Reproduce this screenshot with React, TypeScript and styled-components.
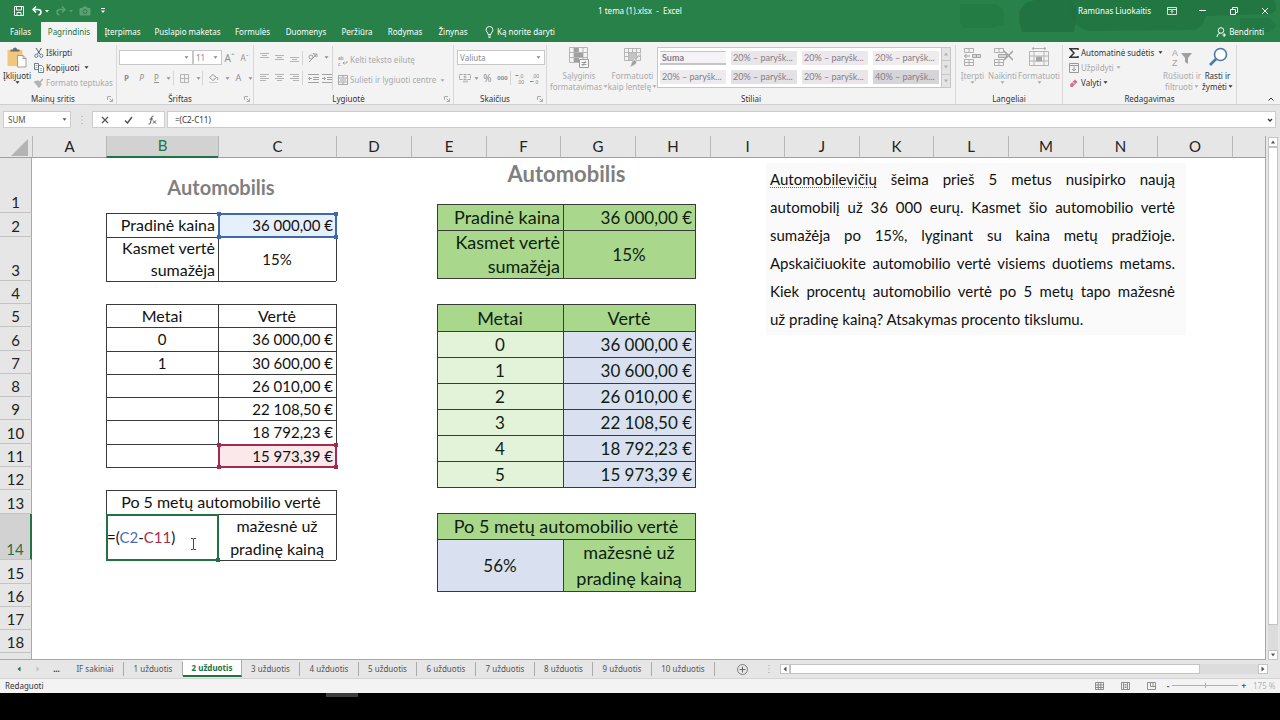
import React from 'react';
import styled, { createGlobalStyle, css } from 'styled-components';

const ui = '"Noto Sans", "Open Sans", sans-serif';
const sheetFont = 'Lato, "Liberation Sans", sans-serif';
const green = '#217346';
const ink = '#333333';
const faded = '#a9a9a9';

const Global = createGlobalStyle`
  *, *::before, *::after { box-sizing: border-box; }
  body { margin: 0; background: #000; font-family: ${ui}; font-size: 8px; line-height: 10px; color: ${ink}; font-variant-ligatures: none; }
  button, input, select { font: inherit; color: inherit; margin: 0; padding: 0; border: 0; background: none; }
  button { display: inline-flex; align-items: center; justify-content: center; white-space: nowrap; flex: none; }
  svg { display: block; flex: none; fill: none; stroke: currentColor; stroke-width: 1; font-family: "Liberation Sans", sans-serif; }
`;

const Page = styled.div`
  display: flex;
  flex-direction: column;
  min-height: 100vh;
  overflow: hidden;
`;

/* ---------- title bar and tabs ---------- */

const Header = styled.header`
  position: relative;
  background: #278148;
  color: #fff;
`;
const HeaderArt = styled.svg`
  position: absolute;
  right: 0;
  top: 0;
  && { fill: #1f6f3e; stroke: none; }
`;
const TitleBar = styled.div`
  position: relative;
  display: grid;
  grid-template-columns: 1fr auto 1fr;
  align-items: center;
  height: 22px;
`;
const QuickAccess = styled.div`
  display: flex;
  align-items: center;
  gap: 6px;
  padding-left: 13px;
`;
const QuickButton = styled.button<{ $w?: number; $dim?: boolean }>`
  width: ${p => p.$w ?? 12}px;
  height: 14px;
  opacity: ${p => (p.$dim ? 0.25 : 1)};
`;
const DocTitle = styled.h1`
  margin: 0;
  font-size: 8px;
  font-weight: 400;
`;
const WindowSide = styled.div`
  display: flex;
  justify-content: flex-end;
  align-items: center;
`;
const WindowButton = styled.button`
  width: 31px;
  height: 22px;
`;
const UserName = styled.span`
  padding-right: 5px;
`;
const TabRow = styled.nav`
  position: relative;
  display: flex;
  height: 20px;
`;
const RibbonTab = styled.button<{ $w: number; $active?: boolean }>`
  width: ${p => p.$w}px;
  height: 20px;
  ${p => p.$active && css`background: #f3f3f3; color: ${green};`}
`;
const TellMe = styled.button`
  gap: 3px;
  padding-left: 9px;
`;
const Share = styled.button`
  gap: 3px;
  margin-left: auto;
  padding-right: 16px;
`;

/* ---------- ribbon ---------- */

const Ribbon = styled.div`
  display: flex;
  height: 63px;
  background: #f3f3f3;
  border-bottom: 1px solid #cfcfcf;
  padding-top: 3px;
`;
const Group = styled.section<{ $w: number }>`
  display: flex;
  flex-direction: column;
  width: ${p => p.$w}px;
  height: 59px;
  border-right: 1px solid #d8d8d8;
  flex: none;
`;
const GroupBody = styled.div<{ $pad?: number }>`
  display: flex;
  height: 47px;
  padding-left: ${p => p.$pad ?? 0}px;
`;
const GroupLabel = styled.div<{ $launcher?: boolean }>`
  display: flex;
  justify-content: center;
  align-items: center;
  position: relative;
  height: 12px;
  padding: 1px ${p => (p.$launcher ? 10 : 0)}px 0 0;
  > svg { position: absolute; right: 3px; top: 4px; }
`;
const Stack = styled.div<{ $w?: number }>`
  display: flex;
  flex-direction: column;
  flex: none;
  width: ${p => (p.$w ? `${p.$w}px` : 'auto')};
`;
const Row = styled.div<{ $h?: number; $gap?: number }>`
  display: flex;
  align-items: center;
  height: ${p => p.$h ?? 21}px;
  gap: ${p => p.$gap ?? 0}px;
`;
const SmallButton = styled.button<{ $off?: boolean }>`
  height: 15px;
  gap: 2px;
  justify-content: flex-start;
  color: ${p => (p.$off ? faded : ink)};
`;
const BigButton = styled.button<{ $w: number; $off?: boolean }>`
  flex-direction: column;
  justify-content: flex-start;
  width: ${p => p.$w}px;
  padding-top: 2px;
  color: ${p => (p.$off ? faded : ink)};
  > svg:first-child { margin-bottom: 2px; }
`;
const BigLine = styled.span`
  display: flex;
  align-items: center;
  gap: 1px;
  height: 11px;
`;
const ToolButton = styled.button<{ $w?: number; $size?: number }>`
  width: ${p => p.$w ?? 15}px;
  height: 16px;
  font-size: ${p => p.$size ?? 8}px;
  color: #8f8f8f;
`;
const Rule = styled.span<{ $h?: number }>`
  width: 1px;
  height: ${p => p.$h ?? 14}px;
  background: #d5d5d5;
  flex: none;
`;
const SelectBox = styled.div<{ $w: number }>`
  display: grid;
  align-items: center;
  width: ${p => p.$w}px;
  height: 15px;
  background: #fff;
  border: 1px solid #c8c8c8;
  color: #8a8a8a;
  > * { grid-area: 1 / 1; }
  > svg { justify-self: end; margin-right: 3px; pointer-events: none; }
  select { appearance: none; width: 100%; padding-left: 2px; }
`;
const Gallery = styled.div`
  display: flex;
  width: 294px;
  height: 41px;
  margin-top: 2px;
  background: #fff;
  border: 1px solid #c6c6c6;
`;
const StyleGrid = styled.div`
  display: grid;
  grid-template-columns: repeat(4, 66px);
  grid-auto-rows: 14px;
  gap: 5px;
  padding: 3px 2px;
  flex: 1;
`;
const StyleButton = styled.button<{ $bg: string; $total?: boolean }>`
  justify-content: flex-start;
  padding-left: 2px;
  font-family: ${sheetFont};
  font-size: 9px;
  background: ${p => p.$bg};
  color: #857d85;
  ${p => p.$total && css`
    font-weight: 700;
    border-top: 1px solid #c4c4c4;
    border-bottom: 2px solid #c4c4c4;
  `}
`;
const GalleryScroll = styled.div`
  display: grid;
  width: 10px;
  background: #e4e4e4;
  border-left: 1px solid #c6c6c6;
  color: #b0b0b0;
  button + button { border-top: 1px solid #c6c6c6; }
`;
const RibbonEnd = styled.div`
  display: flex;
  flex: 1;
  justify-content: flex-end;
  align-items: flex-end;
  padding: 0 5px 1px 0;
`;

/* ---------- formula bar ---------- */

const FormulaBar = styled.div`
  display: flex;
  align-items: center;
  height: 31px;
  padding: 0 4px 2px 3px;
  background: #e6e6e6;
`;
const NameBox = styled.label`
  display: flex;
  align-items: center;
  width: 68px;
  height: 17px;
  padding: 0 4px;
  background: #fff;
  border: 1px solid #cdcdcd;
  color: #555;
  input { width: 54px; }
`;
const Dots = styled.span`
  width: 21px;
  display: flex;
  justify-content: center;
  color: #9a9a9a;
`;
const FormulaButtons = styled.div`
  display: flex;
  width: 73px;
  height: 17px;
  background: #fff;
  border: 1px solid #cdcdcd;
  color: #555;
  button { flex: 1; }
`;
const FormulaInput = styled.label`
  display: flex;
  align-items: center;
  flex: 1;
  height: 17px;
  margin-left: 2px;
  padding: 0 2px 0 7px;
  background: #fff;
  border: 1px solid #cdcdcd;
  input { flex: 1; }
`;

/* ---------- worksheet ---------- */

const SheetArea = styled.main`
  display: flex;
  background: #e6e6e6;
`;
const Canvas = styled.div`
  position: relative;
  flex: 1;
  background: #fff;
  border-right: 1px solid #a8a8a8;
  border-bottom: 1px solid #a8a8a8;
`;
const Sheet = styled.table`
  width: 100%;
  table-layout: fixed;
  border-collapse: separate;
  border-spacing: 0;
  font-family: ${sheetFont};
  font-size: 15px;
  line-height: 20px;
  color: #111;
`;
const ColHead = styled.th<{ $on?: boolean }>`
  height: 22px;
  padding: 0 0 1px;
  font-weight: 400;
  line-height: 19px;
  background: ${p => (p.$on ? '#d2d2d2' : '#e6e6e6')};
  color: ${p => (p.$on ? green : '#222')};
  border-left: 1px solid #b8b8b8;
  border-bottom: ${p => (p.$on ? `2px solid ${green}` : '1px solid #a0a0a0')};
`;
const Corner = styled.td`
  padding: 0 3px 1px 0;
  background: #e6e6e6;
  border-bottom: 1px solid #a0a0a0;
  vertical-align: bottom;
  color: #b4b4b4;
  svg { margin-left: auto; fill: currentColor; stroke: none; }
`;
const SheetRow = styled.tr<{ $h: number }>`
  height: ${p => p.$h}px;
`;
const RowHead = styled.th<{ $on?: boolean }>`
  padding: 0;
  font-weight: 400;
  vertical-align: bottom;
  background: ${p => (p.$on ? '#d2d2d2' : '#e6e6e6')};
  color: ${p => (p.$on ? green : '#222')};
  border-bottom: 1px solid #c4c4c4;
  border-right: ${p => (p.$on ? `2px solid ${green}` : '1px solid #a8a8a8')};
`;
const RowFoot = styled.th`
  padding: 0;
  background: #e6e6e6;
  border-right: 1px solid #a8a8a8;
`;
const edge = '#3a3a3a';
const Cell = styled.td<{ $t?: boolean; $l?: boolean; $align?: string; $lh?: number; $bg?: string }>`
  position: relative;
  padding: 0 ${p => (p.$align === 'left' ? 1 : 3)}px;
  text-align: ${p => p.$align ?? 'center'};
  line-height: ${p => p.$lh ?? 20}px;
  background: ${p => p.$bg ?? 'transparent'};
  white-space: nowrap;
  box-shadow: ${p =>
    [p.$t && `inset 0 1px ${edge}`, p.$l && `inset 1px 0 ${edge}`].filter(Boolean).join(', ') || 'none'};
`;
const TextCell = styled(Cell)`
  font-size: 16px;
`;
const SheetTitle = styled.span`
  display: block;
  padding-top: 2px;
  font-size: 20px;
  font-weight: 700;
  color: #7f7f7f;
`;
const RangeFrame = styled.span<{ $c: string }>`
  position: absolute;
  inset: 0 -1px -1px 0;
  z-index: 1;
  border: 2px solid ${p => p.$c};
`;
const Handle = styled.i<{ $c: string; $x: 'left' | 'right'; $y: 'top' | 'bottom' }>`
  position: absolute;
  ${p => p.$x}: -3px;
  ${p => p.$y}: -3px;
  width: 4px;
  height: 4px;
  background: ${p => p.$c};
`;
const Ref = styled.span<{ $c: string }>`
  color: ${p => p.$c};
`;
const Pointer = styled.svg`
  position: absolute;
  left: 84px;
  top: 24px;
`;

const SamplePicture = styled.figure`
  position: absolute;
  left: 437px;
  top: 22px;
  width: 259px;
  margin: 0;
  font-family: ${sheetFont};
  color: #10200f;
`;
const SampleTitle = styled.figcaption`
  height: 46px;
  padding-top: 4px;
  text-align: center;
  font-size: 22px;
  line-height: 24px;
  font-weight: 700;
  color: #7f7f7f;
`;
const SampleTable = styled.table`
  width: 100%;
  table-layout: fixed;
  margin-bottom: 25px;
  border-collapse: separate;
  border-spacing: 0;
  border-right: 1px solid ${edge};
  border-bottom: 1px solid ${edge};
  font-size: 17px;
`;
const SampleCell = styled(Cell)`
  padding-top: 2px;
`;
const SampleText = styled(Cell)`
  font-size: 18px;
`;
const TaskNote = styled.article`
  position: absolute;
  left: 766px;
  top: 27px;
  width: 420px;
  padding: 2px 11px 2px 4px;
  background: #fafafa;
  font-family: ${sheetFont};
  font-size: 15px;
  line-height: 28px;
  color: #111;
`;
const NoteLine = styled.span<{ $last?: boolean }>`
  display: block;
  white-space: nowrap;
  text-align: justify;
  text-align-last: ${p => (p.$last ? 'left' : 'justify')};
`;
const Misspelt = styled.span`
  text-decoration: underline dotted #c8374a 1px;
  text-decoration-skip-ink: none;
  text-underline-offset: 2px;
`;

const VScroll = styled.div`
  display: flex;
  flex-direction: column;
  width: 10px;
  margin: 1px 2px 0 2px;
  background: #dcdcdc;
`;
const ScrollButton = styled.button`
  width: 10px;
  height: 10px;
  background: #fff;
  border: 1px solid #c4c4c4;
  color: #555;
`;
const VThumb = styled.div`
  height: 478px;
  background: #fff;
  border: 1px solid #c4c4c4;
`;

/* ---------- sheet tabs and status bar ---------- */

const TabStrip = styled.div`
  display: flex;
  align-items: center;
  height: 19px;
  background: #e6e6e6;
  border-bottom: 1px solid #d4d4d4;
`;
const TabNav = styled.div`
  display: flex;
  width: 67px;
  padding-left: 9px;
  button { width: 19px; height: 16px; }
`;
const SheetTab = styled.button<{ $w: number; $on?: boolean }>`
  width: ${p => p.$w}px;
  height: ${p => (p.$on ? 17 : 14)}px;
  align-self: ${p => (p.$on ? 'flex-start' : 'center')};
  border-right: 1px solid #ababab;
  color: #555;
  ${p => p.$on && css`
    background: #fff;
    color: ${green};
    font-weight: 700;
    border-bottom: 2px solid ${green};
  `}
`;
const AddSheet = styled.button`
  width: 32px;
  height: 16px;
  margin-left: 11px;
  color: #666;
`;
const HScroll = styled.div`
  display: flex;
  flex: 1;
  height: 10px;
  margin: 0 12px 0 1px;
  background: #dcdcdc;
`;
const HThumb = styled.div`
  width: 84%;
  background: #fff;
  border: 1px solid #c4c4c4;
`;
const Track = styled.div`
  flex: 1;
`;
const StatusBar = styled.footer`
  display: flex;
  align-items: center;
  height: 14px;
  padding: 0 5px 1px;
  background: #f3f3f3;
`;
const Views = styled.div`
  display: flex;
  margin-left: auto;
  color: #777;
  button { width: 26px; height: 13px; }
`;
const ZoomControl = styled.label`
  display: flex;
  align-items: center;
  gap: 3px;
  margin-left: 2px;
  color: #555;
`;
const Slider = styled.input`
  appearance: none;
  width: 66px;
  height: 9px;
  background:
    linear-gradient(#b0b0b0, #b0b0b0) center / 1px 5px no-repeat,
    linear-gradient(#b0b0b0, #b0b0b0) center / 100% 1px no-repeat;
  &::-webkit-slider-thumb { appearance: none; width: 1px; height: 5px; background: #b0b0b0; }
`;
const ZoomValue = styled.span`
  width: 26px;
  padding-left: 4px;
  white-space: nowrap;
  color: #b4b4b4;
`;
const Taskbar = styled.div`
  flex: 1;
  min-height: 27px;
  background: #000;
  padding-left: 326px;
  &::before { content: ''; display: block; width: 32px; height: 4px; background: #3c3c3c; }
`;

/* ---------- icons ---------- */

type IcoProps = { w?: number; h?: number; children: React.ReactNode };
const Ico = ({ w = 12, h = 12, children }: IcoProps) => (
  <svg width={w} height={h} viewBox={`0 0 ${w} ${h}`} aria-hidden="true">{children}</svg>
);
const Caret = () => <Ico w={5} h={3}><path d="M0.5 0.3h4L2.5 2.8z" fill="currentColor" stroke="none" /></Ico>;
const Launcher = () => (
  <Ico w={6} h={6}><path d="M0.5 4V0.5H4M2.5 2.5L5 5M5.5 2.5v3h-3" stroke="#999" strokeWidth="0.8" /></Ico>
);
const Tri = ({ d, c = 'currentColor' }: { d: 'u' | 'd' | 'l' | 'r'; c?: string }) => (
  <Ico w={6} h={6}>
    <path fill={c} stroke="none" d={{ u: 'M3 1.5L5 4.5H1z', d: 'M1 1.5h4L3 4.5z', l: 'M1.5 3l3-2.5v5z', r: 'M4.5 3l-3-2.5v5z' }[d]} />
  </Ico>
);
const Lines = ({ xs, y }: { xs: [number, number][]; y: number }) => (
  <Ico w={10} h={14}>
    {xs.map(([a, b], i) => <path key={i} d={`M${a} ${y + i * 2 + 0.5}H${b}`} stroke="#b4b4b4" />)}
  </Ico>
);
const CellsIcon = ({ children }: { children: React.ReactNode }) => (
  <Ico w={20} h={21}>
    <path d="M1.500 1.500h9v4h-9zM6 1.500v4M1.500 12.500h9v6h-9zM6 12.500v6M1.500 15.500h9" stroke="#b0b0b0" />
    {children}
  </Ico>
);

/* ---------- data ---------- */

const columns: [string, number][] = [
  ['A', 74], ['B', 112], ['C', 118], ['D', 75], ['E', 75], ['F', 74], ['G', 75], ['H', 75],
  ['I', 74], ['J', 75], ['K', 74], ['L', 75], ['M', 75], ['N', 74], ['O', 75],
];
const ribbonTabs: [string, number][] = [
  ['Failas', 41], ['Pagrindinis', 56], ['Įterpimas', 51], ['Puslapio maketas', 79], ['Formulės', 51],
  ['Duomenys', 56], ['Peržiūra', 46], ['Rodymas', 50], ['Žinynas', 46],
];
const sheetTabs: [string, number][] = [
  ['IF sakiniai', 57], ['1 užduotis', 59], ['2 užduotis', 59], ['3 užduotis', 58], ['4 užduotis', 59],
  ['5 užduotis', 58], ['6 užduotis', 59], ['7 užduotis', 59], ['8 užduotis', 58], ['9 užduotis', 59], ['10 užduotis', 63],
];
const styleNames: [string, string][] = [
  ['Suma', '#f6f3f8'], ['20% – paryšk...', '#e9e6ea'], ['20% – paryšk...', '#ece8ec'], ['20% – paryšk...', '#f0ecee'],
  ['20% – paryšk...', '#eeebee'], ['20% – paryšk...', '#e3e1e5'], ['20% – paryšk...', '#e9e5e9'], ['40% – paryšk...', '#d6d4d8'],
];
const values = ['36 000,00 €', '30 600,00 €', '26 010,00 €', '22 108,50 €', '18 792,23 €', '15 973,39 €'];
const note = [
  'automobilį už 36 000 eurų. Kasmet šio automobilio vertė',
  'sumažėja po 15%, lyginant su kaina metų pradžioje.',
  'Apskaičiuokite automobilio vertė visiems duotiems metams.',
  'Kiek procentų automobilio vertė po 5 metų tapo mažesnė',
];

const Frame = ({ c }: { c: string }) => (
  <RangeFrame $c={c}>
    <Handle $c={c} $x="left" $y="top" />
    <Handle $c={c} $x="right" $y="top" />
    <Handle $c={c} $x="left" $y="bottom" />
    <Handle $c={c} $x="right" $y="bottom" />
  </RangeFrame>
);

const Line = ({ n, h, children }: { n: number; h: number; children?: React.ReactNode }) => (
  <SheetRow $h={h}>
    <RowHead scope="row" $on={n === 14}>{n}</RowHead>
    <Cell />
    {children ?? <Cell colSpan={2} />}
  </SheetRow>
);

const TopBar = () => (
  <Header>
    <HeaderArt width="320" height="42" viewBox="0 0 320 42" aria-hidden="true">
      <path opacity=".3" d="M0 4h36l8 6v14l-14 4H4l-4-6z" />
      <path opacity=".7" d="M60 10q6-10 16-10h34q8 4 6 18l-2 14H62q-4-10-2-22z" />
      <path opacity=".6" d="M110 0h204q6 10-4 14l-64 2q-4 14-16 14l-100 1q-14-3-18-12z" />
      <path opacity=".5" d="M280 18h30l6 8-6 6h-30z" />
    </HeaderArt>
    <TitleBar>
      <QuickAccess>
        <QuickButton aria-label="Įrašyti">
          <Ico w={10} h={10}><path d="M.5.5h9v9h-9zM2.500.5v3.500h5V.5M3 9.500V6.500h4v3" /></Ico>
        </QuickButton>
        <QuickButton $w={19} aria-label="Anuliuoti">
          <Ico w={17} h={10}><path d="M4 .5L1 3.500l3 3M1 3.500h5q3 0 3 2.500T6.500 9" strokeWidth="1.500" /><path d="M13 4h4l-2 2.500z" fill="currentColor" stroke="none" /></Ico>
        </QuickButton>
        <QuickButton $w={17} $dim aria-label="Perdaryti">
          <Ico w={17} h={10}><path d="M6 .5l3 3-3 3M9 3.500H4q-3 0-3 2.500T3.500 9" strokeWidth="1.500" /><path d="M13 4h4l-2 2.500z" fill="currentColor" stroke="none" /></Ico>
        </QuickButton>
        <QuickButton $dim aria-label="Ekrano nuotrauka">
          <Ico w={12} h={10}><path d="M1 2.500h2.500l1-1.500h3l1 1.500H11v6.500H1z" fill="currentColor" /><circle cx="6" cy="5.500" r="2" stroke="#278148" /></Ico>
        </QuickButton>
        <QuickButton aria-label="Tinkinti">
          <Ico w={6} h={6}><path d="M1 .5h4" /><path d="M1 2.500h4L3 5z" fill="currentColor" stroke="none" /></Ico>
        </QuickButton>
      </QuickAccess>
      <DocTitle>1 tema (1).xlsx&nbsp; -&nbsp; Excel</DocTitle>
      <WindowSide>
        <UserName>Ramūnas Liuokaitis</UserName>
        <WindowButton aria-label="Juostelė"><Ico w={10} h={8}><path d="M.5.5h9v7h-9zM.5 2.500h9M5 6.500V3.500M3.500 5L5 3.500 6.500 5" strokeWidth=".8" /></Ico></WindowButton>
        <WindowButton aria-label="Sumažinti"><Ico w={8} h={2}><path d="M0 .5h7" /></Ico></WindowButton>
        <WindowButton aria-label="Atkurti"><Ico w={8} h={8}><path d="M.5 2.500h5v5h-5zM2.500 2.500V.5h5v5h-2" strokeWidth=".9" /></Ico></WindowButton>
        <WindowButton aria-label="Uždaryti"><Ico w={8} h={8}><path d="M1 1l6 6M7 1L1 7" /></Ico></WindowButton>
      </WindowSide>
    </TitleBar>
    <TabRow>
      {ribbonTabs.map(([t, w], i) => <RibbonTab key={t} $w={w} $active={i === 1}>{t}</RibbonTab>)}
      <TellMe>
        <Ico w={9} h={12}><path d="M3 8.500Q3 7 2 6 1 5 1 4a3.500 3.500 0 0 1 7 0q0 1-1 2T6 8.500zM3 10h3M3.500 11.500h2" strokeWidth=".9" /></Ico>
        Ką norite daryti
      </TellMe>
      <Share>
        <Ico w={10} h={10}><circle cx="5" cy="3.500" r="2.800" /><path d="M1 10q0-3 3-4M6.500 8h3.500M8.200 6.200v3.600" /></Ico>
        Bendrinti
      </Share>
    </TabRow>
  </Header>
);

const RibbonBar = () => (
  <Ribbon>
    <Group $w={117}>
      <GroupBody>
        <BigButton $w={34}>
          <Ico w={20} h={21}>
            <path d="M.5 3h15v16H.5z" fill="#efc87e" stroke="none" />
            <path d="M3.500 4.500h9v-2h-2.500q0-2-2-2t-2 2H3.500z" fill="#6a6a6a" stroke="none" />
            <path d="M10.500 8.500h5.500l3 3v8.500h-8.500zM16 8.500v3h3" fill="#fff" stroke="#8a8a8a" strokeWidth=".8" />
          </Ico>
          <BigLine>Įklijuoti</BigLine>
          <Caret />
        </BigButton>
        <Stack>
          <SmallButton>
            <Ico w={10} h={10}><path d="M2 0l4 6M7.500 0l-4 6" stroke="#555" /><circle cx="2.300" cy="7.800" r="1.600" stroke="#5a83a8" /><circle cx="7.300" cy="7.800" r="1.600" stroke="#5a83a8" /></Ico>
            Iškirpti
          </SmallButton>
          <SmallButton>
            <Ico w={10} h={10}><path d="M.5.5h4v6h-4zM4.500 2.500h3l2 2v5h-5z" fill="#fff" stroke="#5f7186" strokeWidth=".9" /><path d="M6 5.500h2M6 7.500h2M1.500 2.500h2M1.500 4.500h2" stroke="#5f86ac" strokeWidth=".7" /></Ico>
            Kopijuoti&nbsp; <Caret />
          </SmallButton>
          <SmallButton $off>
            <Ico w={10} h={10}><path d="M1 4l3-1 3 3-2 3zM6 4l3-3" fill="#b5b5b5" stroke="#b0b0b0" strokeWidth="1.500" /></Ico>
            Formato teptukas
          </SmallButton>
        </Stack>
      </GroupBody>
      <GroupLabel $launcher>Mainų sritis<Launcher /></GroupLabel>
    </Group>

    <Group $w={137}>
      <GroupBody $pad={2}>
        <Stack>
          <Row $h={25}>
            <SelectBox $w={74}><select aria-label="Šriftas" /><Caret /></SelectBox>
            <SelectBox $w={29}><select aria-label="Dydis"><option>11</option></select><Caret /></SelectBox>
            <ToolButton $size={10}>A<sup>ˆ</sup></ToolButton>
            <ToolButton $size={8}>A<sup>ˇ</sup></ToolButton>
          </Row>
          <Row $h={16}>
            <ToolButton><b>P</b></ToolButton>
            <ToolButton><i>P</i></ToolButton>
            <ToolButton><u>P</u></ToolButton>
            <ToolButton $w={9}><Caret /></ToolButton>
            <Rule />
            <ToolButton $w={20}><Ico w={9} h={9}><path d="M.5.5h8v8h-8zM4.500.5v8M.5 4.500h8" stroke="#b5b5b5" /></Ico></ToolButton>
            <ToolButton $w={8}><Caret /></ToolButton>
            <Rule />
            <ToolButton $w={20}><Ico w={11} h={10}><path d="M1.500 4.500l3.500-3 3.500 3-3.500 3zM9 4q1.500 2 .5 3" stroke="#9a9a9a" /><path d="M1 9.500h9" stroke="#ccc" /></Ico></ToolButton>
            <ToolButton $w={8}><Caret /></ToolButton>
            <ToolButton $size={9}>A</ToolButton>
            <ToolButton $w={8}><Caret /></ToolButton>
          </Row>
        </Stack>
      </GroupBody>
      <GroupLabel $launcher>Šriftas<Launcher /></GroupLabel>
    </Group>

    <Group $w={200}>
      <GroupBody $pad={3}>
        <Stack>
          <Row $h={25}>
            <ToolButton><Lines y={2} xs={[[0, 9], [2, 7], [0, 9]]} /></ToolButton>
            <ToolButton><Lines y={4} xs={[[0, 9], [2, 7], [0, 9]]} /></ToolButton>
            <ToolButton><Lines y={6} xs={[[0, 9], [2, 7], [0, 9]]} /></ToolButton>
            <Rule />
            <ToolButton $w={20}><Ico w={11} h={11}><path d="M1 10l8-8M9 2v3M9 2H6" stroke="#a0a0a0" /><path d="M1 5q0-2 2-2t2 2-2 2-2-2M5 1l3 4" stroke="#a0a0a0" /></Ico></ToolButton>
            <ToolButton $w={7}><Caret /></ToolButton>
          </Row>
          <Row $h={16}>
            <ToolButton><Lines y={3} xs={[[0, 9], [0, 6], [0, 9], [0, 6]]} /></ToolButton>
            <ToolButton><Lines y={3} xs={[[0, 9], [2, 7], [0, 9], [2, 7]]} /></ToolButton>
            <ToolButton><Lines y={3} xs={[[0, 9], [3, 9], [0, 9], [3, 9]]} /></ToolButton>
            <Rule />
            <ToolButton $w={20}><Ico w={11} h={9}><path d="M0 .5h11M5 3.500h6M5 5.500h6M0 8.500h11M4 4.500H.5M2 3L.5 4.500 2 6" stroke="#a0a0a0" /></Ico></ToolButton>
            <ToolButton $w={9}><Ico w={11} h={9}><path d="M0 .5h11M5 3.500h6M5 5.500h6M0 8.500h11M0 4.500h3.500M2 3l1.500 1.500L2 6" stroke="#a0a0a0" /></Ico></ToolButton>
          </Row>
        </Stack>
        <Row $h={46} $gap={5}>
          <Rule $h={44} />
          <Stack>
            <Row $h={24}><SmallButton $off>
              <Ico w={10} h={11}><text x="0" y="5" fontSize="5" fill="#888" stroke="none">ab</text><text x="0" y="11" fontSize="5" fill="#888" stroke="none">c</text><path d="M9 6v2H5M6.500 6.500L5 8l1.500 1.500" stroke="#999" strokeWidth=".8" /></Ico>
              Kelti teksto eilutę
            </SmallButton></Row>
            <Row $h={16}><SmallButton $off>
              <Ico w={10} h={10}><path d="M.5.5h9v9h-9zM.5 3h9M.5 7h9M5 .5V3M5 7v2.500M2 5h6" stroke="#a0a0a0" strokeWidth=".9" /></Ico>
              Sulieti ir lygiuoti centre&nbsp; <Caret />
            </SmallButton></Row>
          </Stack>
        </Row>
      </GroupBody>
      <GroupLabel $launcher>Lygiuotė<Launcher /></GroupLabel>
    </Group>

    <Group $w={93}>
      <GroupBody $pad={3}>
        <Stack>
          <Row $h={25}>
            <SelectBox $w={88}><select aria-label="Skaičių formatas"><option>Valiuta</option></select><Caret /></SelectBox>
          </Row>
          <Row $h={16}>
            <ToolButton $w={16}><Ico w={12} h={10}><path d="M.5 1.500h11v5H.5z" stroke="#a5a5a5" strokeDasharray="3 1" /><circle cx="6" cy="4" r="1" stroke="#a5a5a5" /><path d="M4 8.500h5" stroke="#c5c5c5" strokeWidth="2" /></Ico></ToolButton>
            <ToolButton $w={7}><Caret /></ToolButton>
            <ToolButton $size={10}>%</ToolButton>
            <ToolButton $w={15} $size={6}><b>000</b></ToolButton>
            <Rule />
            <ToolButton $w={18}><Ico w={11} h={11}><text x="4" y="5" fontSize="5" fill="#888" stroke="none">,0</text><text x="2" y="11" fontSize="5" fill="#888" stroke="none">,00</text><path d="M3.500 2.500H.5" stroke="#888" /></Ico></ToolButton>
            <ToolButton $w={13}><Ico w={11} h={11}><text x="2" y="5" fontSize="5" fill="#888" stroke="none">,00</text><text x="4" y="11" fontSize="5" fill="#888" stroke="none">,0</text><path d="M0 8.500h3.500" stroke="#888" /></Ico></ToolButton>
          </Row>
        </Stack>
      </GroupBody>
      <GroupLabel $launcher>Skaičius<Launcher /></GroupLabel>
    </Group>

    <Group $w={409}>
      <GroupBody $pad={3}>
        <BigButton $w={58} $off>
          <Ico w={20} h={21}>
            <path d="M.5.5h18v15H.5zM5 .5v15M9.500.5v15M14 .5v15M.5 5.500h18M.5 10.500h18" stroke="#b5b5b5" />
            <path d="M5 1h4.500v4H5zM5 6h9v4H5zM5 11h5v4H5z" fill="#a0a0a0" stroke="none" />
            <path d="M10.500 12.500h9v8h-9z" fill="#f8f8f8" stroke="#9a9a9a" />
            <path d="M12.500 15.500h5M12.500 17.500h5M16.500 14l-3 5" stroke="#888" strokeWidth=".8" />
          </Ico>
          <BigLine>Sąlyginis</BigLine>
          <BigLine>formatavimas <Caret /></BigLine>
        </BigButton>
        <BigButton $w={49} $off>
          <Ico w={20} h={21}>
            <path d="M1.500 1.500h16v12h-16zM5.500 1.500v12M9.500 1.500v12M13.500 1.500v12M1.500 5.500h16M1.500 9.500h16" stroke="#b5b5b5" />
            <path d="M6 6h7v7H6z" fill="#c4c4c4" stroke="none" />
            <path d="M19 5l-6 8-2-1zM11.500 13q2 0 2 2 0 3-7 5 2-2 2-4t3-3z" fill="#a0a0a0" stroke="#f3f3f3" strokeWidth=".5" />
          </Ico>
          <BigLine>Formatuoti</BigLine>
          <BigLine>kaip lentelę <Caret /></BigLine>
        </BigButton>
        <Gallery>
          <StyleGrid>
            {styleNames.map(([t, bg], i) => <StyleButton key={i} $bg={bg} $total={i === 0}>{t}</StyleButton>)}
          </StyleGrid>
          <GalleryScroll>
            <button aria-label="Aukštyn"><Tri d="u" /></button>
            <button aria-label="Žemyn"><Tri d="d" /></button>
            <button aria-label="Daugiau"><Tri d="d" /></button>
          </GalleryScroll>
        </Gallery>
      </GroupBody>
      <GroupLabel>Stiliai</GroupLabel>
    </Group>

    <Group $w={107}>
      <GroupBody $pad={2}>
        <BigButton $w={29} $off>
          <CellsIcon><path d="M9.500 7.500h8v3h-8zM13.500 7.500v3" fill="#d5d5d5" stroke="#a6a6a6" /><path d="M7 9H1.500M3.500 7l-2 2 2 2" stroke="#999" /></CellsIcon>
          <BigLine>Įterpti</BigLine><Caret />
        </BigButton>
        <BigButton $w={31} $off>
          <CellsIcon><path d="M5.500 7.500h8v3h-8z" fill="#d5d5d5" stroke="#a6a6a6" /><path d="M11 4l9 9M20 4l-9 9" stroke="#a0a0a0" strokeWidth="1.500" /></CellsIcon>
          <BigLine>Naikinti</BigLine><Caret />
        </BigButton>
        <BigButton $w={42} $off>
          <Ico w={20} h={21}>
            <path d="M.5 4.500h19v14H.5zM.5 9h19M.5 14h19M5 4.500v14M15 4.500v14M3 1.500h14M5 0L3 1.500 5 3M15 0l2 1.500L15 3" stroke="#b4b4b4" />
            <path d="M7 9.500h6v5H7z" fill="#a6a6a6" stroke="none" />
          </Ico>
          <BigLine>Formatuoti</BigLine><Caret />
        </BigButton>
      </GroupBody>
      <GroupLabel>Langeliai</GroupLabel>
    </Group>

    <Group $w={174}>
      <GroupBody $pad={6}>
        <Stack $w={94}>
          <SmallButton>
            <Ico w={10} h={10}><path d="M9 2V.8H1L5 5 1 9.200h8V8" strokeWidth="1.500" /></Ico>
            Automatinė sudėtis&nbsp; <Caret />
          </SmallButton>
          <SmallButton $off>
            <Ico w={10} h={10}><path d="M.5.5h9v9h-9zM.5 2.500h9M5 3.500v4M3 6l2 2 2-2" stroke="#999" /></Ico>
            Užpildyti <Caret />
          </SmallButton>
          <SmallButton>
            <Ico w={10} h={10}><path d="M1 6.500l5-5 2.500 2.500-5 5H1.500z" fill="#d6708f" stroke="none" /><path d="M3.500 4l2.500 2.500" stroke="#fff" strokeWidth=".8" /></Ico>
            Valyti <Caret />
          </SmallButton>
        </Stack>
        <BigButton $w={38} $off>
          <Ico w={20} h={21}>
            <text x="0" y="9" fontSize="9" fill="#a0a0a0" stroke="none">A</text>
            <text x="0" y="19" fontSize="9" fill="#a0a0a0" stroke="none">Z</text>
            <path d="M9 6h11l-4 5v6l-3-2v-4z" fill="#a0a0a0" stroke="none" />
          </Ico>
          <BigLine>Rūšiuoti ir</BigLine>
          <BigLine>filtruoti <Caret /></BigLine>
        </BigButton>
        <BigButton $w={33}>
          <Ico w={20} h={21}><circle cx="12.500" cy="7.500" r="6" stroke="#4a7aa8" strokeWidth="1.600" fill="#fff" /><path d="M8 12l-6 6" stroke="#4a7aa8" strokeWidth="2.600" /></Ico>
          <BigLine>Rasti ir</BigLine>
          <BigLine>žymėti <Caret /></BigLine>
        </BigButton>
      </GroupBody>
      <GroupLabel>Redagavimas</GroupLabel>
    </Group>
    <RibbonEnd>
      <button aria-label="Sutraukti juostelę"><Ico w={8} h={8}><path d="M1.500 5.500L4 3l2.500 2.500" /></Ico></button>
    </RibbonEnd>
  </Ribbon>
);

const App = () => (
  <Page>
    <Global />
    <TopBar />
    <RibbonBar />
    <FormulaBar>
      <NameBox><input aria-label="Vardo laukas" defaultValue="SUM" /><Caret /></NameBox>
      <Dots><Ico w={2} h={10}><path d="M1 1v1M1 4.500v1M1 8v1" /></Ico></Dots>
      <FormulaButtons>
        <button aria-label="Atšaukti"><Ico w={8} h={8}><path d="M1 1l6 6M7 1L1 7" strokeWidth="1.300" /></Ico></button>
        <button aria-label="Įvesti"><Ico w={9} h={8}><path d="M1 4.500L3.500 7 8 1" strokeWidth="1.500" /></Ico></button>
        <button aria-label="Įterpti funkciją"><Ico w={9} h={10}><path d="M5.500 1Q4 .5 3.500 3L2.500 8Q2 9.500.5 9M1.500 4h3.500M5 5.500l3 3M8 5.500l-3 3" /></Ico></button>
      </FormulaButtons>
      <FormulaInput><input aria-label="Formulė" defaultValue="=(C2-C11)" /><Ico w={6} h={6}><path d="M1 2l2 2 2-2" strokeWidth="1.300" /></Ico></FormulaInput>
    </FormulaBar>

    <SheetArea>
      <Canvas>
        <Sheet>
          <colgroup>
            <col width={32} />
            {columns.map(([c, w]) => <col key={c} width={w} />)}
            <col />
          </colgroup>
          <thead>
            <tr>
              <Corner><Ico w={18} h={17}><path d="M17 0v17H0z" /></Ico></Corner>
              {columns.map(([c]) => <ColHead key={c} scope="col" $on={c === 'B'}>{c}</ColHead>)}
              <ColHead />
            </tr>
          </thead>
          <tbody>
            <Line n={1} h={55}><Cell colSpan={2}><SheetTitle>Automobilis</SheetTitle></Cell></Line>
            <Line n={2} h={24}>
              <TextCell $t $l $align="right">Pradinė kaina</TextCell>
              <Cell $t $l $align="right" $bg="#e6f0fa">36 000,00 €<Frame c="#3f69ad" /></Cell>
              <Cell $l />
            </Line>
            <Line n={3} h={44}>
              <TextCell $t $l $align="right" $lh={22}>Kasmet vertė<br />sumažėja</TextCell>
              <Cell $t $l>15%</Cell>
              <Cell $l />
            </Line>
            <Line n={4} h={23}><Cell $t colSpan={2} /></Line>
            <Line n={5} h={23}><TextCell $t $l>Metai</TextCell><TextCell $t $l>Vertė</TextCell><Cell $l /></Line>
            {values.map((v, i) => (
              <Line key={v} n={6 + i} h={i === 0 || i === 4 ? 24 : 23}>
                <Cell $t $l>{i < 2 ? i : ''}</Cell>
                <Cell $t $l $align="right" $bg={i === 5 ? '#fae8eb' : undefined}>{v}{i === 5 && <Frame c="#a62a50" />}</Cell>
                <Cell $l />
              </Line>
            ))}
            <Line n={12} h={23}><Cell $t colSpan={2} /></Line>
            <Line n={13} h={24}><TextCell $t $l colSpan={2}>Po 5 metų automobilio vertė</TextCell><Cell $l /></Line>
            <Line n={14} h={46}>
              <Cell $t $l $align="left">
                =(<Ref $c="#4a6fb5">C2</Ref>-<Ref $c="#a62a50">C11</Ref>)
                <RangeFrame $c={green}><Handle $c={green} $x="right" $y="bottom" /></RangeFrame>
                <Pointer width="7" height="12" viewBox="0 0 7 12"><path d="M1 .5h2l.5.5.5-.5h2M3.500 1v10M1 11.500h2l.5-.5.5.5h2" stroke="#444" /></Pointer>
              </Cell>
              <TextCell $t $l $lh={23}>mažesnė už<br />pradinę kainą</TextCell>
              <Cell $l />
            </Line>
            <Line n={15} h={24}><Cell $t colSpan={2} /></Line>
            <Line n={16} h={23} />
            <Line n={17} h={23} />
            <Line n={18} h={23} />
            <SheetRow $h={6}><RowFoot /></SheetRow>
          </tbody>
        </Sheet>

        <SamplePicture>
          <SampleTitle>Automobilis</SampleTitle>
          <SampleTable>
            <colgroup><col width={126} /><col /></colgroup>
            <tbody>
              <SheetRow $h={26}>
                <SampleText $t $l $align="right" $bg="#a9d88d">Pradinė kaina</SampleText>
                <SampleCell $t $l $align="right" $bg="#a9d88d">36 000,00 €</SampleCell>
              </SheetRow>
              <SheetRow $h={48}>
                <SampleText $t $l $align="right" $lh={24} $bg="#a9d88d">Kasmet vertė<br />sumažėja</SampleText>
                <SampleCell $t $l $bg="#a9d88d">15%</SampleCell>
              </SheetRow>
            </tbody>
          </SampleTable>
          <SampleTable>
            <colgroup><col width={126} /><col /></colgroup>
            <tbody>
              <SheetRow $h={27}>
                <SampleText $t $l $bg="#a9d88d">Metai</SampleText>
                <SampleText $t $l $bg="#a9d88d">Vertė</SampleText>
              </SheetRow>
              {values.map((v, i) => (
                <SheetRow key={v} $h={26}>
                  <SampleCell $t $l $bg="#e2f3da">{i}</SampleCell>
                  <SampleCell $t $l $align="right" $bg="#d9e0f0">{v}</SampleCell>
                </SheetRow>
              ))}
            </tbody>
          </SampleTable>
          <SampleTable>
            <colgroup><col width={126} /><col /></colgroup>
            <tbody>
              <SheetRow $h={26}><SampleText $t $l $bg="#a9d88d" colSpan={2}>Po 5 metų automobilio vertė</SampleText></SheetRow>
              <SheetRow $h={52}>
                <SampleCell $t $l $bg="#d9e0f0">56%</SampleCell>
                <SampleText $t $l $lh={26} $bg="#a9d88d">mažesnė už<br />pradinę kainą</SampleText>
              </SheetRow>
            </tbody>
          </SampleTable>
        </SamplePicture>

        <TaskNote>
          <NoteLine><Misspelt>Automobilevičių</Misspelt> šeima prieš 5 metus nusipirko naują</NoteLine>
          {note.map(t => <NoteLine key={t}>{t}</NoteLine>)}
          <NoteLine $last>už pradinę kainą? Atsakymas procento tikslumu.</NoteLine>
        </TaskNote>
      </Canvas>
      <VScroll>
        <ScrollButton aria-label="Aukštyn"><Tri d="u" /></ScrollButton>
        <VThumb />
        <Track />
        <ScrollButton aria-label="Žemyn"><Tri d="d" /></ScrollButton>
      </VScroll>
    </SheetArea>

    <TabStrip>
      <TabNav>
        <button aria-label="Ankstesnis"><Tri d="l" c={green} /></button>
        <button aria-label="Kitas"><Tri d="r" c="#c0c0c0" /></button>
        <button aria-label="Visi lapai"><b>...</b></button>
      </TabNav>
      {sheetTabs.map(([t, w], i) => <SheetTab key={t} $w={w} $on={i === 2}>{t}</SheetTab>)}
      <AddSheet aria-label="Naujas lapas"><Ico w={11} h={11}><circle cx="5.500" cy="5.500" r="5" strokeWidth=".8" /><path d="M2.500 5.500h6M5.500 2.500v6" /></Ico></AddSheet>
      <Dots><Ico w={2} h={10}><path d="M1 1v1M1 4.500v1M1 8v1" /></Ico></Dots>
      <HScroll>
        <ScrollButton aria-label="Kairėn"><Tri d="l" /></ScrollButton>
        <HThumb />
        <Track />
        <ScrollButton aria-label="Dešinėn"><Tri d="r" /></ScrollButton>
      </HScroll>
    </TabStrip>
    <StatusBar>
      <span>Redaguoti</span>
      <Views>
        <button aria-label="Įprastas"><Ico w={9} h={8}><path d="M.5.5h8v7h-8zM3.200.5v7M5.800.5v7M.5 3h8M.5 5.500h8" strokeWidth=".8" /></Ico></button>
        <button aria-label="Puslapio maketas"><Ico w={9} h={8}><path d="M.5.5h8v7h-8zM2.500.5v7M6.500.5v7M3.500 2.500h2M3.500 4h2M3.500 5.500h2" strokeWidth=".8" /></Ico></button>
        <button aria-label="Lūžiai"><Ico w={9} h={8}><path d="M.5.5h8v7h-8zM3.500.5v4M6 .5v4M3.500 4.500h5" strokeWidth=".8" /></Ico></button>
      </Views>
      <ZoomControl>
        <b>-</b>
        <Slider type="range" aria-label="Mastelis" defaultValue={50} />
        <b>+</b>
        <ZoomValue>175 %</ZoomValue>
      </ZoomControl>
    </StatusBar>
    <Taskbar />
  </Page>
);

export default App;
